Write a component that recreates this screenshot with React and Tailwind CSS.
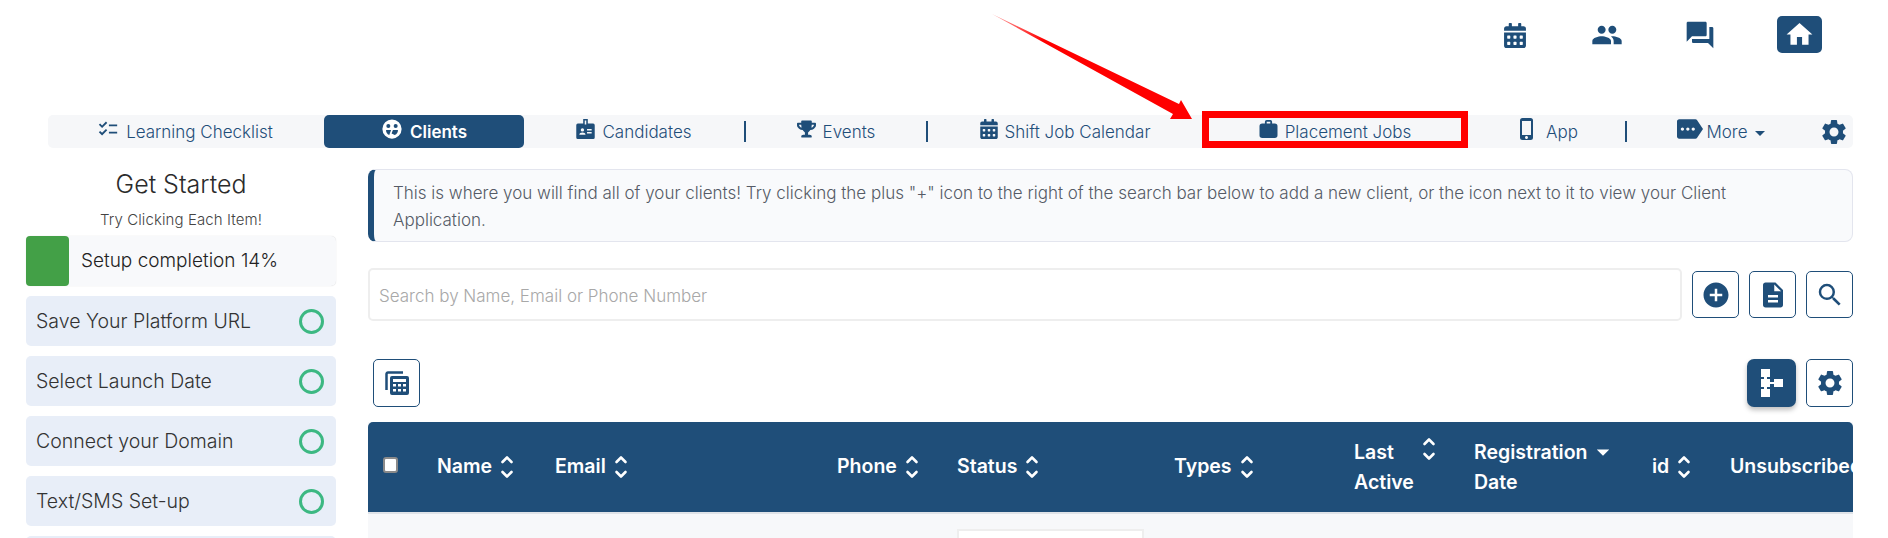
import {
  MdPeople, MdQuestionAnswer, MdHome, MdChecklist, MdPhoneIphone, MdMore,
  MdSettings, MdAddCircle, MdDescription, MdSearch, MdArrowDropDown,
} from 'react-icons/md';
import { FaCalendarAlt, FaTrophy } from 'react-icons/fa';

const font = { fontFamily: '"Inter", "Noto Sans", sans-serif' };

function FaceIcon({ className }) {
  return (
    <svg viewBox="0 0 24 24" className={className} fill="currentColor">
      <path fillRule="evenodd" d="M12 1.500a10.500 10.500 0 1 0 0 21 10.500 10.500 0 0 0 0-21ZM8 6.500a2.200 2.200 0 1 1 0 4.400 2.200 2.200 0 0 1 0-4.400Zm8 0a2.200 2.200 0 1 1 0 4.400 2.200 2.200 0 0 1 0-4.400ZM5.500 13H11l-2 5.500A6 6 0 0 1 5.500 13Zm7.500 0h5.500a6 6 0 0 1-3.500 5.500L11.500 17Z" />
    </svg>
  );
}

function BadgeIcon({ className }) {
  return (
    <svg viewBox="0 0 24 26" className={className} fill="currentColor">
      <path fillRule="evenodd" d="M9 0h6v6h7a2 2 0 0 1 2 2v16a2 2 0 0 1-2 2H2a2 2 0 0 1-2-2V8a2 2 0 0 1 2-2h7ZM11 2v5h2V2ZM8 12a2.200 2.200 0 1 0 0 4.400A2.200 2.200 0 0 0 8 12Zm-4 8.500c0-2 1.800-3 4-3s4 1 4 3ZM14 13h6v2h-6Zm0 4h6v2h-6Z" />
    </svg>
  );
}

function CaseIcon({ className }) {
  return (
    <svg viewBox="0 0 20 20" className={className} fill="currentColor">
      <path fillRule="evenodd" d="M6 4V2a2 2 0 0 1 2-2h4a2 2 0 0 1 2 2v2h3a3 3 0 0 1 3 3v10a3 3 0 0 1-3 3H3a3 3 0 0 1-3-3V7a3 3 0 0 1 3-3Zm2 0h4V2H8Z" />
    </svg>
  );
}

function CalcIcon() {
  return (
    <svg viewBox="0 0 24 24" className="w-[24px] h-[24px]" fill="currentColor">
      <path d="M1.500 19V3A1.500 1.500 0 0 1 3 1.500H18" fill="none" stroke="currentColor" strokeWidth="2.500" />
      <path fillRule="evenodd" d="M7 5h15a2 2 0 0 1 2 2v15a2 2 0 0 1-2 2H7a2 2 0 0 1-2-2V7a2 2 0 0 1 2-2Zm1 3v3h13V8Zm0 5v2.500h3V13Zm5 0v2.500h3V13Zm5 0v2.500h3V13ZM8 18v2.500h3V18Zm5 0v2.500h3V18Zm5 0v2.500h3V18Z" />
    </svg>
  );
}

function SortIcon() {
  return (
    <svg viewBox="0 0 14 24" className="w-[14px] h-[24px] shrink-0" fill="none" stroke="#fff" strokeWidth="2.600" strokeLinecap="round" strokeLinejoin="round">
      <path d="M2.500 7 7 2.500 11.500 7M2.500 17 7 21.500 11.500 17" />
    </svg>
  );
}

function Sep() {
  return <span className="w-[2px] h-[21px] bg-[#1f4e79] shrink-0" />;
}

function NavTab({ icon, label, width, active }) {
  return (
    <div className={`${width} h-full shrink-0 flex items-center justify-center gap-[7px] text-[17px] ${active ? 'bg-[#1f4e79] text-white font-semibold rounded-[5px]' : 'text-[#1f4e79] font-light'}`}>
      {icon}
      <span className="pt-[2px]">{label}</span>
    </div>
  );
}

function ChecklistItem({ label }) {
  return (
    <div className="h-[50px] rounded-[5px] bg-[#e8eef8] flex items-center justify-between pl-[10px] pr-[12px] text-[19.5px] font-light text-[#333]">
      <span className="pt-[1px]">{label}</span>
      <span className="w-[25px] h-[25px] rounded-full border-[3px] border-[#3cb882]" />
    </div>
  );
}

function OutlineButton({ children, height = 'h-[47px]' }) {
  return (
    <button className={`w-[47px] ${height} border border-[#1f4e79] rounded-[5px] bg-white text-[#1f4e79] flex items-center justify-center shrink-0`}>
      {children}
    </button>
  );
}

function HeaderCell({ width, children }) {
  return <div className={`${width} shrink-0 flex items-center gap-[8px]`}>{children}</div>;
}

export default function App() {
  return (
    <div className="relative w-[1888px] h-[538px] overflow-hidden bg-white" style={font}>
      {/* top icons */}
      <div className="h-[115px] flex justify-end pr-[66px] pt-[16px] text-[#1f4e79]">
        <div className="flex items-start">
          <FaCalendarAlt className="w-[22px] h-[25px] mt-[7px]" />
          <MdPeople className="w-[32px] h-[32px] ml-[65px] mt-[3px]" />
          <MdQuestionAnswer className="w-[32px] h-[32px] ml-[61px] mt-[3px]" />
          <div className="w-[45px] h-[37px] ml-[61px] rounded-[5px] bg-[#1f4e79] flex items-center justify-center">
            <MdHome className="w-[31px] h-[31px] text-white" />
          </div>
        </div>
      </div>

      {/* nav */}
      <nav className="ml-[48px] w-[1805px] h-[33px] bg-[#f6f7f9] rounded-[5px] flex items-center">
        <NavTab width="w-[274px]" label="Learning Checklist" icon={<MdChecklist className="w-[22px] h-[22px] -mt-[6px]" />} />
        <div className="w-[2px] shrink-0" />
        <NavTab width="w-[200px]" active label="Clients" icon={<FaceIcon className="w-[22px] h-[22px] -mt-[6px]" />} />
        <NavTab width="w-[220px]" label="Candidates" icon={<BadgeIcon className="w-[19px] h-[20px] -mt-[6px]" />} />
        <Sep />
        <NavTab width="w-[180px]" label="Events" icon={<FaTrophy className="w-[19px] h-[18px] -mt-[6px]" />} />
        <Sep />
        <NavTab width="w-[274px]" label="Shift Job Calendar" icon={<FaCalendarAlt className="w-[18px] h-[20px] -mt-[5px]" />} />
        <NavTab width="w-[266px]" label="Placement Jobs" icon={<CaseIcon className="w-[19px] h-[18px] -mt-[5px]" />} />
        <NavTab width="w-[157px]" label="App" icon={<MdPhoneIphone className="w-[24px] h-[26px] -mt-[5px]" />} />
        <Sep />
        <div className="w-[193px] flex items-center justify-center text-[#1f4e79] text-[17px] font-light shrink-0 pl-[2px]">
          <MdMore className="w-[26px] h-[26px] -mt-[6px] mr-[3px] -scale-x-100" />
          <span className="pt-[2px]">More</span>
          <MdArrowDropDown className="w-[24px] h-[24px] mt-[2px]" />
        </div>
        <MdSettings className="w-[30px] h-[30px] text-[#1f4e79] ml-[-1px]" />
      </nav>

      <div className="flex mt-[21px] pr-[35px]">
        {/* sidebar */}
        <aside className="w-[310px] ml-[26px] shrink-0">
          <h2 className="text-[25px] font-light text-center text-[#2b2b2b] leading-[30px]">Get Started</h2>
          <p className="text-[15px] font-light tracking-[0.1px] text-center text-[#444] leading-[20px] mt-[11px]">Try Clicking Each Item!</p>
          <div className="mt-[6px] h-[50px] bg-[#f8f9fb] rounded-[5px] flex items-center shadow-[0_0_1px_rgba(0,0,0,0.2)]">
            <div className="w-[43px] h-full bg-[#43a047] rounded-[4px]" />
            <span className="ml-[12px] text-[19px] font-light text-[#222]">Setup completion 14%</span>
          </div>
          <div className="mt-[10px] flex flex-col gap-[10px]">
            <ChecklistItem label="Save Your Platform URL" />
            <ChecklistItem label="Select Launch Date" />
            <ChecklistItem label="Connect your Domain" />
            <ChecklistItem label="Text/SMS Set-up" />
            <div className="h-[50px] rounded-[5px] bg-[#e8eef8]" />
          </div>
        </aside>

        {/* main */}
        <main className="ml-[32px] w-[1485px] shrink-0">
          <div className="h-[73px] bg-[#f9fafc] border border-[#e3e5ee] border-l-[6px] border-l-[#1f4e79] rounded-[8px] pl-[19px] pr-[100px] pt-[10px] text-[17px] font-light leading-[27px] text-[#555b66]">
            This is where you will find all of your clients! Try clicking the plus "+" icon to the right of the search bar below to add a new client, or the icon next to it to view your Client Application.
          </div>

          <div className="mt-[26px] flex items-center gap-[10px]">
            <input
              placeholder="Search by Name, Email or Phone Number"
              className="w-[1314px] h-[53px] border-2 border-[#eeeeee] rounded-[5px] pl-[9px] pt-[2px] text-[17px] font-light placeholder:text-[#a8a8a8] outline-none"
            />
            <OutlineButton><MdAddCircle className="w-[30px] h-[30px]" /></OutlineButton>
            <OutlineButton><MdDescription className="w-[30px] h-[30px]" /></OutlineButton>
            <OutlineButton><MdSearch className="w-[30px] h-[30px]" /></OutlineButton>
          </div>

          <div className="mt-[38px] flex items-center justify-between pl-[5px]">
            <OutlineButton height="h-[48px]"><CalcIcon /></OutlineButton>
            <div className="flex gap-[10px]">
              <button className="w-[49px] h-[48px] rounded-[7px] bg-[#1f4e79] shadow-[0_3px_5px_rgba(0,0,0,0.25)] flex items-center justify-center">
                <svg viewBox="0 0 22 28" className="w-[22px] h-[28px]" fill="#fff">
                  <path d="M0 0h9v8H0zM0 10h9v8H0zM0 20h9v8H0zM3 8h3v2H3zM3 18h3v2H3zM9 13h4v2H9zM13 10h9v8h-9z" />
                </svg>
              </button>
              <OutlineButton height="h-[48px]"><MdSettings className="w-[30px] h-[30px]" /></OutlineButton>
            </div>
          </div>

          {/* table */}
          <div className="mt-[15px] bg-[#f7f8fa] h-[200px]">
            <div className="h-[92px] bg-[#1f4e79] rounded-t-[5px] border-b-2 border-b-[#dfe3e8] flex items-center text-white text-[19.5px] font-semibold overflow-hidden">
              <div className="w-[69px] shrink-0 pl-[15px]">
                <input type="checkbox" className="block appearance-none w-[15px] h-[16px] -mt-[4px] bg-white border-2 border-[#8a8a8a] rounded-[3px]" />
              </div>
              <HeaderCell width="w-[118px]">Name <SortIcon /></HeaderCell>
              <HeaderCell width="w-[282px]">Email <SortIcon /></HeaderCell>
              <HeaderCell width="w-[120px]">Phone <SortIcon /></HeaderCell>
              <HeaderCell width="w-[217px]">Status <SortIcon /></HeaderCell>
              <HeaderCell width="w-[180px]">Types <SortIcon /></HeaderCell>
              <div className="w-[120px] shrink-0 flex items-start gap-[12px] leading-[30px]">
                <span className="w-[56px]">Last<br />Active</span>
                <SortIcon />
              </div>
              <div className="w-[178px] shrink-0 flex items-start leading-[30px]">
                <span>Registration<br />Date</span>
                <MdArrowDropDown className="w-[30px] h-[30px] ml-[1px]" />
              </div>
              <HeaderCell width="w-[78px]">id <SortIcon /></HeaderCell>
              <span className="shrink-0">Unsubscribed</span>
            </div>
            <div className="ml-[589px] mt-[15px] w-[187px] h-[40px] bg-white border-2 border-[#eeeeee]" />
          </div>
        </main>
      </div>

      {/* annotation: red box and arrow over the nav */}
      <div className="absolute left-[1202px] top-[111px] w-[266px] h-[37px] border-[7px] border-[#ff0000]" />
      <svg className="absolute left-0 top-0 w-[1888px] h-[538px] pointer-events-none" viewBox="0 0 1888 538">
        <defs>
          <linearGradient id="arrowFade" x1="992" y1="14" x2="1040" y2="46" gradientUnits="userSpaceOnUse">
            <stop offset="0" stopColor="#ff0000" stopOpacity="0.35" />
            <stop offset="1" stopColor="#ff0000" />
          </linearGradient>
        </defs>
        <polygon points="992,14 1179,104 1181,100 1192,119 1170,119 1173,114" fill="url(#arrowFade)" />
      </svg>
    </div>
  );
}
